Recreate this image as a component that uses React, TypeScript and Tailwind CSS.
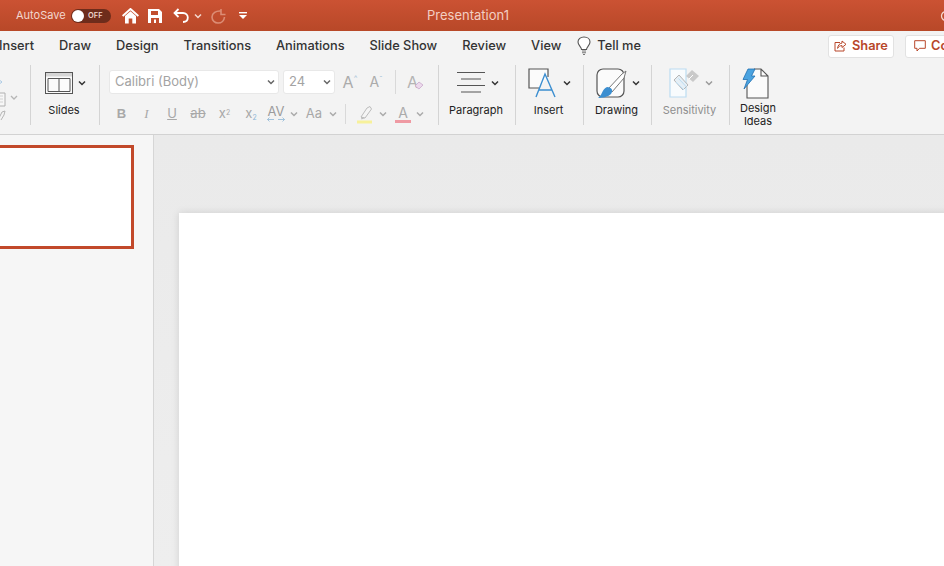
import React from "react";

const Chev = ({ c = "#444", w = 8, sw = 1.5 }: { c?: string; w?: number; sw?: number }) => (
  <svg width={w} height={w} viewBox="0 0 8 8" fill="none" className="shrink-0"><path d="M1 2.5 L4 5.5 L7 2.5" stroke={c} strokeWidth={sw} /></svg>
);

const Sep = () => <div className="w-px h-[24px] bg-[#d9d9d9]" />;

function Section({ w, label, labelColor, children, chevron }: { w: number; label?: React.ReactNode; labelColor?: string; children?: React.ReactNode; chevron?: boolean }) {
  return (
    <div className="shrink-0 h-[60px] border-r border-[#d4d4d4] flex flex-col items-center pr-[2px]" style={{ width: w }}>
      <div className="h-[36px] flex items-center justify-center gap-[5px] ml-[2px]">
        {children}
        {chevron && <Chev c={labelColor ? "#9a9a9a" : "#333"} />}
      </div>
      <div className={`mt-[0.5px] text-[11px] leading-[17px] text-center ${labelColor ? "text-[#8e8e8e]" : "text-[#222]"}`}>{label}</div>
    </div>
  );
}

function Cell({ w, children }: { w: number; children: React.ReactNode }) {
  return <div className="shrink-0 flex items-center justify-center h-[20px]" style={{ width: w }}>{children}</div>;
}

export default function App() {
  const tabs = ["Draw", "Design", "Transitions", "Animations", "Slide Show", "Review", "View"];
  return (
    <div className="w-[944px] h-[566px] overflow-hidden flex flex-col bg-[#ebebeb] font-['Inter','Liberation_Sans',sans-serif]">
      {/* title bar */}
      <div className="h-[31px] shrink-0 flex items-center bg-gradient-to-b from-[#cb5233] to-[#b84828] pl-[16px]">
        <span className="text-[11px] text-[#f3d8cf] w-[55px] whitespace-nowrap">AutoSave</span>
        <div className="w-[40px] h-[14px] rounded-full bg-[#6e2c1b] flex items-center pl-[1px] gap-[4px]">
          <div className="w-[12px] h-[12px] rounded-full bg-white" />
          <span className="text-[7.5px] font-semibold text-[#f0d5cc] leading-none">OFF</span>
        </div>
        <svg className="ml-[11px]" width="17" height="16" viewBox="0 0 17 16" fill="none">
          <path d="M0.6 8 L8.5 1 L16.4 8" stroke="#fff" strokeWidth="2" />
          <path d="M3 8 L8.5 3.3 L14 8 V15.5 H10.3 V10.5 H6.7 V15.5 H3 Z" fill="#fff" />
        </svg>
        <svg className="ml-[9px]" width="14" height="14" viewBox="0 0 14 14" fill="none">
          <path d="M0 0 H11 L14 3 V14 H0 Z" fill="#fff" />
          <rect x="3" y="2" width="7" height="4" fill="#c24e2e" />
          <rect x="3" y="9" width="8" height="5" fill="#c24e2e" />
          <rect x="6" y="10.5" width="2" height="3.5" fill="#fff" />
        </svg>
        <svg className="ml-[11px]" width="16" height="15" viewBox="0 0 16 15" fill="none">
          <path d="M5.5 1 L1.5 5 L5.5 9" stroke="#fff" strokeWidth="1.8" />
          <path d="M2 5 H10 C13 5 14.8 7.2 14.8 9.5 C14.8 12 13 14 10 14" stroke="#fff" strokeWidth="1.8" />
        </svg>
        <div className="ml-[5px]"><Chev c="#f3d8cf" w={8} /></div>
        <svg className="ml-[9px]" width="15" height="16" viewBox="0 0 15 16" fill="none">
          <path d="M10 1 V6.5 H14.5" stroke="#dc8d75" strokeWidth="1.6" />
          <path d="M10 3 C5 2.5 1 5 1 9 C1 12.5 3.8 15 7 15 C10.5 15 13.2 12.5 13.5 9" stroke="#dc8d75" strokeWidth="1.6" />
        </svg>
        <svg className="ml-[13px]" width="8" height="9" viewBox="0 0 8 9"><rect x="0" y="1" width="8" height="1.4" fill="#fff" /><path d="M0 4 H8 L4 8 Z" fill="#fff" /></svg>
        <span className="ml-[180px] text-[13px] text-[#f3cfc3] whitespace-nowrap">Presentation1</span>
        <div className="ml-auto mr-[-8px]">
          <svg width="12" height="12" viewBox="0 0 12 12" fill="none"><circle cx="6" cy="6" r="4.5" stroke="#f3d8cf" strokeWidth="1.3" /></svg>
        </div>
      </div>

      {/* tabs */}
      <div className="h-[30px] shrink-0 bg-[#f3f3f3] flex items-center text-[12.8px] text-[#333] font-medium relative">
        <span className="ml-[-1px] w-[60px] shrink-0 whitespace-nowrap">Insert</span>
        <div className="flex items-center gap-[25px] shrink-0">
          {tabs.map((t) => <span key={t} className="whitespace-nowrap">{t}</span>)}
        </div>
        <svg className="ml-[16px] shrink-0 -mt-[1px]" width="14" height="20" viewBox="0 0 14 20" fill="none">
          <path d="M4.5 13.5 C4.5 11 1 9.5 1 6 C1 3 3.5 1 7 1 C10.5 1 13 3 13 6 C13 9.5 9.5 11 9.5 13.5 Z" stroke="#555" strokeWidth="1.1" fill="#fff" />
          <path d="M5 15 H9 M5 16.8 H9 M6 18.5 H8" stroke="#777" strokeWidth="1.1" />
        </svg>
        <span className="ml-[6px] shrink-0 whitespace-nowrap">Tell me</span>
        <div className="ml-[187px] w-[66px] h-[23px] shrink-0 rounded-[3px] bg-white border border-[#e2e2e2] flex items-center justify-center gap-[5px] text-[#b8472a] font-semibold">
          <svg width="13" height="12" viewBox="0 0 13 12" fill="none">
            <path d="M6 2.5 H1 V11 H10 V7.5" stroke="#b8472a" strokeWidth="1" />
            <path d="M8 1 L12 4.3 L8 7.5 V5.6 C6 5.6 4.5 6.6 3.6 8.4 C3.8 5.4 5.5 3.3 8 3.1 Z" stroke="#b8472a" strokeWidth="1" />
          </svg>
          <span>Share</span>
        </div>
        <div className="ml-[11px] w-[66px] h-[23px] shrink-0 rounded-[3px] bg-white border border-[#e2e2e2] flex items-center pl-[8px] gap-[5px] text-[#b8472a] font-semibold overflow-hidden">
          <svg width="12" height="12" viewBox="0 0 12 12" fill="none" className="shrink-0">
            <path d="M0.7 0.7 H11.3 V8.3 H5.5 L3 11 V8.3 H0.7 Z" stroke="#b8472a" strokeWidth="1" />
          </svg>
          <span>Comments</span>
        </div>
      </div>

      {/* ribbon */}
      <div className="h-[74px] shrink-0 bg-[#f3f3f3] border-b border-[#d2d2d2] flex pt-[4px]">
        {/* clipboard (clipped) */}
        <div className="w-[31px] shrink-0 h-[60px] border-r border-[#d4d4d4]">
          <svg width="22" height="60" viewBox="0 0 22 60" fill="none">
            <path d="M-2 14 L2 17 L-2 20" stroke="#a9c9e4" strokeWidth="1" />
            <path d="M-1 28 H5 V41 H-1" stroke="#b0b0b0" strokeWidth="1" fill="#f7f7f7" />
            <path d="M-1 31 H3 M-1 34 H3 M-1 37 H3" stroke="#c9c9c9" strokeWidth="0.8" />
            <path d="M11 31 L14 34 L17 31" stroke="#b5b5b5" strokeWidth="1.3" />
            <path d="M-1 53 L2 47 L5 46 L4 50 L1 55" stroke="#b5b5b5" strokeWidth="1" />
          </svg>
        </div>
        <Section w={69} label="Slides" chevron>
          <svg width="28" height="22" viewBox="0 0 28 22" fill="none">
            <rect x="0.5" y="0.5" width="27" height="21" fill="#fbfbfb" stroke="#555" />
            <rect x="1" y="1" width="26" height="3.5" fill="#d5d5d5" />
            <path d="M3 6.5 H25 V19.5 H3 Z M14 6.5 V19.5" stroke="#555" />
          </svg>
        </Section>

        {/* font group */}
        <div className="w-[339px] shrink-0 h-[60px] border-r border-[#d4d4d4] pl-[9px] pt-[5px] flex flex-col">
          <div className="flex items-center h-[24px]">
            <div className="w-[170px] h-[24px] rounded-[3px] bg-white border border-[#e8e8e8] flex items-center justify-between pl-[5px] pr-[3px] text-[13px] text-[#a3a3a3]">
              <span className="whitespace-nowrap">Calibri (Body)</span><Chev c="#666" />
            </div>
            <div className="ml-[4px] w-[52px] h-[24px] rounded-[3px] bg-white border border-[#e8e8e8] flex items-center justify-between pl-[5px] pr-[3px] text-[13px] text-[#a3a3a3]">
              <span>24</span><Chev c="#666" />
            </div>
            <div className="ml-[2px] w-[26px] flex items-start justify-center text-[#ababab] text-[16px] leading-none">A<span className="text-[8px] text-[#a8c3d8]">^</span></div>
            <div className="w-[26px] flex items-start justify-center text-[#ababab] text-[14px] leading-none">A<span className="text-[8px] text-[#a8c3d8]">ˇ</span></div>
            <div className="ml-[6px]"><Sep /></div>
            <div className="ml-[11px] flex items-center relative">
              <span className="text-[16px] leading-none text-[#b4b4b4]">A</span>
              <svg className="-ml-[4px] mt-[6px]" width="10" height="9" viewBox="0 0 10 9"><path d="M1 5 L5 1 L9 4 L5 8 Z" fill="#ecd9ec" stroke="#c9a8cc" strokeWidth="0.8" /></svg>
            </div>
          </div>
          <div className="flex items-center h-[20px] mt-[10px] text-[#a8a8a8]">
            <Cell w={25}><span className="text-[13px] font-bold font-['Liberation_Sans']">B</span></Cell>
            <Cell w={25}><span className="text-[13px] italic font-['Liberation_Serif']">I</span></Cell>
            <Cell w={26}><span className="text-[13px] underline">U</span></Cell>
            <Cell w={26}><span className="text-[13px] line-through">ab</span></Cell>
            <Cell w={27}><span className="text-[13px]">x<sup className="text-[7px]">2</sup></span></Cell>
            <Cell w={26}><span className="text-[13px]">x<sub className="text-[7px] text-[#8db6d6]">2</sub></span></Cell>
            <Cell w={24}>
              <div className="flex flex-col items-center leading-none">
                <span className="text-[13px] leading-[11px] text-[#9c9c9c]">AV</span>
                <svg width="18" height="5" viewBox="0 0 18 5" fill="none"><path d="M0.5 2.5 H7 M2.5 0.5 L0.5 2.5 L2.5 4.5 M11 2.5 H17.5 M15.5 0.5 L17.5 2.5 L15.5 4.5" stroke="#8db6d6" strokeWidth="0.8" /></svg>
              </div>
            </Cell>
            <Cell w={12}><Chev c="#aaa" /></Cell>
            <Cell w={28}><span className="text-[13px]">Aa</span></Cell>
            <Cell w={10}><Chev c="#aaa" /></Cell>
            <div className="ml-[7px]"><div className="w-px h-[20px] bg-[#d9d9d9]" /></div>
            <div className="ml-[10px]"><Cell w={18}>
              <svg width="18" height="19" viewBox="0 0 18 19" fill="none">
                <path d="M5 12 L11 3 L14 1.5 L15.5 4 L9 13 Z" stroke="#bcbcbc" fill="#f5f5f5" />
                <path d="M5 12 L9 13 L5.5 14.5 Z" fill="#bcbcbc" />
                <rect x="1" y="15.5" width="15" height="3" fill="#f7f19b" />
              </svg>
            </Cell></div>
            <div className="ml-[4px]"><Cell w={10}><Chev c="#aaa" /></Cell></div>
            <div className="ml-[6px]">
              <Cell w={18}>
                <div className="flex flex-col items-center">
                  <span className="text-[14px] leading-[14px] text-[#ababab]">A</span>
                  <div className="w-[16px] h-[3px] bg-[#ef9aa3]" />
                </div>
              </Cell>
            </div>
            <div className="ml-[3px]"><Cell w={10}><Chev c="#aaa" /></Cell></div>
          </div>
        </div>

        <Section w={77} label="Paragraph" chevron>
          <svg width="30" height="24" viewBox="0 0 30 24" fill="none">
            <path d="M1 1.5 H29 M5 8 H25 M1 14.5 H29 M5 21 H25" stroke="#555" strokeWidth="1.1" />
          </svg>
        </Section>
        <Section w={68} label="Insert" chevron>
          <svg width="30" height="30" viewBox="0 0 30 30" fill="none">
            <path d="M11 20 H1 V1 H20 V9" stroke="#555" strokeWidth="1.2" fill="#fbfbfb" />
            <path d="M8 29 L17 6 L27 29 M11 22 H24" stroke="#3b8ed0" strokeWidth="1.4" />
          </svg>
        </Section>
        <Section w={68} label="Drawing" chevron>
          <svg width="31" height="31" viewBox="0 0 31 31" fill="none">
            <rect x="1" y="1" width="27" height="28" rx="6" stroke="#555" strokeWidth="1.2" fill="#fbfbfb" />
            <path d="M12 21 L26 6 L30 3 L28 10 L16 24" stroke="#777" strokeWidth="1" fill="#fff" />
            <path d="M11 19 C15 19 18 22 15 26 C12 29 6 30 2 30 C6 28 6 21 11 19 Z" fill="#3b8ed0" />
          </svg>
        </Section>
        <Section w={78} label="Sensitivity" labelColor="#8e8e8e" chevron>
          <svg width="31" height="30" viewBox="0 0 31 30" fill="none">
            <path d="M1 1 H17 V29 H1 Z" stroke="#bcdcf2" strokeWidth="1.2" fill="#f8fbfd" />
            <path d="M5 12 L10 7 L19 17 L14 22 Z" stroke="#b5b5b5" fill="#e5eff6" />
            <path d="M7 14 L15 22 M9.5 10.5 L17.5 19" stroke="#bcdcf2" />
            <path d="M17 8 L23 2 L30 8 L24 14 Z" fill="#c9c9c9" />
            <path d="M20 11 L24 7" stroke="#fff" />
          </svg>
        </Section>
        <div className="flex-1 flex">
          <div className="w-[56px] shrink-0 flex flex-col items-center">
            <div className="h-[32px] mt-[3px] ml-[-5px]">
              <svg width="27" height="31" viewBox="0 0 27 31" fill="none">
                <path d="M5 17 V30 H26 V8 L19 1 H12 M19 1 V8 H26" stroke="#555" strokeWidth="1.1" fill="#fbfbfb" />
                <path d="M6 1 H13 L9.5 8 H13 L2 21 L5.5 11.5 H1 Z" fill="#4aa3e0" stroke="#1f6fb0" strokeWidth="0.8" />
              </svg>
            </div>
            <div className="mt-[2px] text-[11px] leading-[13px] text-[#222] text-center">Design<br />Ideas</div>
          </div>
        </div>
      </div>

      {/* body */}
      <div className="flex-1 flex min-h-0">
        <div className="w-[154px] shrink-0 bg-[#f6f6f6] border-r border-[#d6d6d6] pt-[10px]">
          <div className="ml-[-10px] w-[144px] h-[104px] bg-white border-[3px] border-[#c2492a]" />
        </div>
        <div className="flex-1 pl-[25px] pt-[78px] bg-gradient-to-b from-[#eaeaea] to-[#eeeeee] overflow-hidden">
          <div className="w-[800px] h-[500px] bg-white shadow-[0_0_8px_rgba(0,0,0,0.12)]" />
        </div>
      </div>
    </div>
  );
}
